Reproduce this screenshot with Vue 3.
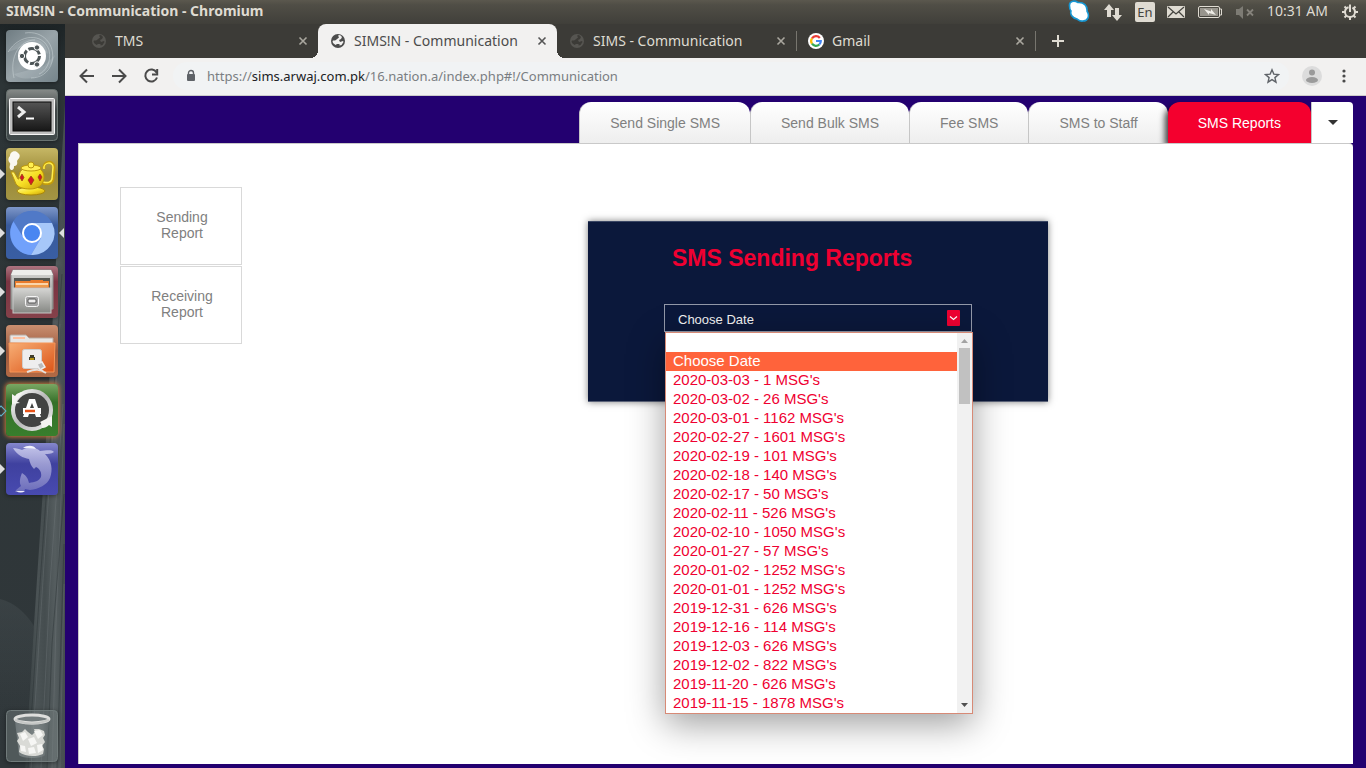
<script setup>
import { ref } from 'vue'

const browserTabs = [
  { title: 'TMS', icon: 'globe' },
  { title: 'SIMS!N - Communication', icon: 'globe', active: true },
  { title: 'SIMS - Communication', icon: 'globe' },
  { title: 'Gmail', icon: 'google' }
]
const pageTabs = ['Send Single SMS', 'Send Bulk SMS', 'Fee SMS', 'SMS to Staff', 'SMS Reports']
const activeTab = ref('SMS Reports')
const sideItems = ['Sending Report', 'Receiving Report']
const dates = [
  '', 'Choose Date', "2020-03-03 - 1 MSG's", "2020-03-02 - 26 MSG's", "2020-03-01 - 1162 MSG's",
  "2020-02-27 - 1601 MSG's", "2020-02-19 - 101 MSG's", "2020-02-18 - 140 MSG's", "2020-02-17 - 50 MSG's",
  "2020-02-11 - 526 MSG's", "2020-02-10 - 1050 MSG's", "2020-01-27 - 57 MSG's", "2020-01-02 - 1252 MSG's",
  "2020-01-01 - 1252 MSG's", "2019-12-31 - 626 MSG's", "2019-12-16 - 114 MSG's", "2019-12-03 - 626 MSG's",
  "2019-12-02 - 822 MSG's", "2019-11-20 - 626 MSG's", "2019-11-15 - 1878 MSG's"
]
const chosen = ref('Choose Date')
</script>

<template>
  <div class="desktop">
    <header class="topbar">
      <span class="window-title">SIMS!N - Communication - Chromium</span>
      <div class="indicators">
        <svg width="24" height="24" viewBox="0 0 24 24"><path d="M2.500 6C2 1 7 0 11 2.500c6-.5 9.500 3.500 9 8.500 3 5 1 10-4 10-3 .5-4-.5-6-2-5-1-7-5-6-8-1-1-1.500-3-1.500-5z" fill="#fff" stroke="#1797d3" stroke-width="1.600" /></svg>
        <svg width="20" height="24" viewBox="0 0 20 24"><g fill="#dfdbd2"><path d="M6 4l5 6H8v7H4v-7H1z" /><path d="M14 21l5-6h-3V8h-4v7H9z" /></g></svg>
        <span class="lang">En</span>
        <svg width="18" height="24" viewBox="0 0 18 24"><rect y="6" width="18" height="12" rx="1" fill="#dfdbd2" /><path d="M1 7l8 7 8-7M1 17l5-5M17 17l-5-5" fill="none" stroke="#45443f" stroke-width="1.2" /></svg>
        <svg width="26" height="24" viewBox="0 0 26 24"><rect x="1.500" y="6.500" width="21" height="11" rx="1.500" fill="none" stroke="#dfdbd2" /><rect x="3" y="8" width="18" height="8" fill="#98958d" /><path d="M23 9h1.500v6H23" fill="none" stroke="#dfdbd2" /><path d="M7 9l7 2.500V9l5 6-7-2v2z" fill="#eeece6" /></svg>
        <svg width="20" height="24" viewBox="0 0 20 24"><path d="M1 9h3l4-3v13l-4-4H1z" fill="#7d7b74" /><path d="M12 9.500l6 6M18 9.500l-6 6" stroke="#85827b" stroke-width="1.800" /></svg>
        <span class="clock">10:31 AM</span>
        <svg width="18" height="24" viewBox="0 0 18 24"><g stroke="#dfdbd2" fill="none" stroke-width="2"><circle cx="9" cy="12" r="5" stroke-dasharray="27.500 4" stroke-dashoffset="-25.500" /><path d="M9 4.500V12" /><path d="M3.500 6.500l2 2M14.500 6.500l-2 2M1 12h3M14 12h3M3.500 17.500l2-2M14.500 17.500l-2-2M9 17v3" /></g></svg>
      </div>
    </header>

    <div class="workspace">
      <nav class="launcher" aria-label="Launcher">
        <svg class="wall" viewBox="0 0 65 744" preserveAspectRatio="none">
          <defs>
            <linearGradient id="wd" x1="0" y1="0" x2="1" y2="0"><stop offset="0" stop-color="#343c3e" /><stop offset=".3" stop-color="#4b5355" /><stop offset=".5" stop-color="#454d4f" /><stop offset=".75" stop-color="#555d5f" /><stop offset="1" stop-color="#454d4f" /></linearGradient>
            <linearGradient id="bk" x1="0" y1="0" x2="0" y2="1"><stop offset="0" stop-color="#1d2426" /><stop offset=".08" stop-color="#2d3537" /><stop offset="1" stop-color="#30373a" /></linearGradient>
            <linearGradient id="hz" x1="0" y1="0" x2="0" y2="1"><stop offset="0" stop-color="#454d50" stop-opacity=".5" /><stop offset="1" stop-color="#454d50" stop-opacity="0" /></linearGradient>
          </defs>
          <rect width="65" height="744" fill="url(#bk)" />
          <path d="M62 130L65 80V744H25L34 600 44 450z" fill="url(#wd)" />
          <path d="M60 300L44 540 31 744M63 380L50 560 41 744M64 400L56 600 52 744M64 560L60 744" fill="none" stroke="#798183" stroke-opacity=".3" />
          <path d="M62 250L40 560 28 744M64 470L52 620 47 744M64 520L57 744" fill="none" stroke="#262e30" stroke-opacity=".4" />
          <path d="M0 575Q20 580 34 602L27 700H0z" fill="url(#hz)" />
        </svg>

        <button class="app" aria-label="Dash">
          <svg viewBox="0 0 52 52"><defs><linearGradient id="da" x1="0" y1="0" x2="1" y2="1"><stop stop-color="#6f7c82" /><stop offset=".5" stop-color="#99a4a9" /><stop offset="1" stop-color="#75848b" /></linearGradient></defs><rect width="52" height="52" rx="4" fill="url(#da)" /><path d="M2 22C13 4 37 2 43 20c3 12-4 22-10 24M8 48C3 26 14 10 29 10M19 3c18-3 31 12 27 29-3 11-12 16-21 16" fill="none" stroke="#d4dde0" stroke-width="1" opacity=".45" /><path d="M2 22C18 2 40 6 42 24L26 14zM8 44C12 50 40 55 49 25L38 36z" fill="#d1dcdf" opacity=".22" /><circle cx="26" cy="26" r="14" fill="#fff" /><circle cx="26" cy="26" r="7.500" fill="none" stroke="#4d5557" stroke-width="3" stroke-dasharray="13.700 2" /><g fill="#4d5557" stroke="#fff"><circle cx="16" cy="26" r="2.700" /><circle cx="31" cy="17.500" r="2.700" /><circle cx="31" cy="34.500" r="2.700" /></g></svg>
        </button>
        <button class="app" aria-label="Terminal">
          <svg viewBox="0 0 52 52"><defs><linearGradient id="te" x1="0" y1="0" x2="0" y2="1"><stop stop-color="#878b89" /><stop offset=".4" stop-color="#414748" /><stop offset="1" stop-color="#414a4b" /></linearGradient><linearGradient id="ts" x1="0" y1="0" x2="0" y2="1"><stop stop-color="#555" /><stop offset="1" stop-color="#171717" /></linearGradient></defs><rect x=".5" y=".5" width="51" height="51" rx="4" fill="url(#te)" stroke="#697371" /><rect x="3.500" y="9.500" width="45" height="36" rx="1" fill="#bebebe" stroke="#f5f5f5" /><rect x="7" y="13" width="38" height="29" fill="url(#ts)" stroke="#090909" /><path d="M12 18l6 5-6 5" fill="none" stroke="#ededed" stroke-width="3" /><path d="M20 29.500h8" stroke="#fff" stroke-width="2" /></svg>
        </button>
        <button class="app running" aria-label="Teapot">
          <svg viewBox="0 0 52 52"><defs><linearGradient id="tp" x1="0" y1="0" x2="0" y2="1"><stop stop-color="#c6b765" /><stop offset=".5" stop-color="#9b8936" /><stop offset="1" stop-color="#a39544" /></linearGradient><linearGradient id="tb" x1="0" y1="0" x2="1" y2="1"><stop stop-color="#fffc95" /><stop offset=".55" stop-color="#f7df25" /><stop offset="1" stop-color="#c99b05" /></linearGradient></defs><rect width="52" height="52" rx="4" fill="url(#tp)" /><path d="M38 21c-1-8 9-9 10-2l-1 12c-1 5-6 5-10 4" fill="none" stroke="#c49c0a" stroke-width="3" /><path d="M38 21c-1-7 9-8 9-2l-1 12c-1 4-5 4-9 3" fill="none" stroke="#ffed4b" stroke-width="1.500" /><ellipse cx="25" cy="43" rx="14" ry="4" fill="url(#tb)" stroke="#a98608" /><path d="M10 36L5 24l3 0 4 7 1 0c-1-7 4-13 12-13s13 5 13 11c0 8-6 12-14 12-7 0-12-2-14-5z" fill="url(#tb)" stroke="#bd980b" /><ellipse cx="25" cy="20" rx="10" ry="3" fill="#ffed54" stroke="#bf990b" /><circle cx="25" cy="17" r="3" fill="#fff050" stroke="#b8930d" /><path d="M16 26l2 3.500-2 3.500-2-3.500zM25 28l3 4-3 5-3-5zM34 26l2 3-2 4-2-4z" fill="#d51626" stroke="#92440b" stroke-width=".7" /><path d="M5 22c-3-3 0-5-1-7-3-3-1-6 0-7 0-5 6-6 8-3 4 3 0 6-1 8 1 4-1 5-3 5 0 2 0 4-3 4z" fill="#fff" opacity=".92" /></svg>
        </button>
        <button class="app running focused" aria-label="Chromium">
          <svg viewBox="0 0 52 52"><defs><linearGradient id="ch" x1="0" y1="0" x2="0" y2="1"><stop stop-color="#7e97c9" /><stop offset=".35" stop-color="#395b9c" /><stop offset="1" stop-color="#395ea3" /></linearGradient></defs><rect width="52" height="52" rx="4" fill="url(#ch)" /><circle cx="26" cy="26" r="22" fill="#527dcc" /><path d="M7.500 14.500A22 22 0 0 0 25 48l10-17-9-15z" fill="#71a1fb" /><path d="M25 48A22 22 0 0 0 46 16H26l9 15z" fill="#a6c7f9" /><path d="M7.500 14.500C15 1 37-1 46 16H26a10 10 0 0 0-9 14z" fill="#5079c7" /><circle cx="26" cy="26" r="9" fill="#4986f1" stroke="#fff" stroke-width="2" /></svg>
        </button>
        <button class="app running" aria-label="Files">
          <svg viewBox="0 0 52 52"><defs><linearGradient id="fr" x1="0" y1="0" x2="0" y2="1"><stop stop-color="#ad7480" /><stop offset=".3" stop-color="#7b3442" /><stop offset="1" stop-color="#85414a" /></linearGradient><linearGradient id="fg" x1="0" y1="0" x2="0" y2="1"><stop stop-color="#d6d6d4" /><stop offset="1" stop-color="#858783" /></linearGradient></defs><rect width="52" height="52" rx="4" fill="url(#fr)" /><path d="M7 4h38l2 5v34H5V9z" fill="url(#fg)" stroke="#8d8f8c" /><path d="M7 4h38l2 5H5z" fill="#ededeb" /><path d="M8 12h36v11H8z" fill="#555753" /><path d="M9 15h15l1-1h12v1h6v9H9z" fill="#e97b2c" /><path d="M10 18h32" stroke="#fff2d4" stroke-width="1.500" /><path d="M10 20h32" stroke="#f5bd6c" /><rect x="7" y="22" width="38" height="25" fill="url(#fg)" stroke="#c8c8c7" /><rect x="19.500" y="30.500" width="13" height="10" rx="2" fill="#a4a4a4" stroke="#f5f5f5" /><rect x="22" y="33" width="8" height="4" rx="1" fill="#eee" stroke="#555" /></svg>
        </button>
        <button class="app running" aria-label="Network folder">
          <svg viewBox="0 0 52 52"><defs><linearGradient id="nr" x1="0" y1="0" x2="0" y2="1"><stop stop-color="#c98f70" /><stop offset=".5" stop-color="#9d593d" /><stop offset="1" stop-color="#b26a45" /></linearGradient><linearGradient id="ng" x1="0" y1="0" x2="1" y2="1"><stop stop-color="#f7af76" /><stop offset="1" stop-color="#dc5417" /></linearGradient></defs><rect width="52" height="52" rx="4" fill="url(#nr)" /><path d="M4 18v-7q0-1 1-1h15l3 3h24v6z" fill="#e7e6e4" stroke="#b8aaa1" /><path d="M7 13h12" stroke="#ffc09f" stroke-width="2" /><path d="M3 18h46l-1 29H4z" fill="url(#ng)" stroke="#f69557" /><rect x="16.500" y="24.500" width="19" height="19" rx="2" fill="#eee" stroke="#d1cecb" /><path d="M23 35v-3h1v-2h4v2h1v3z" fill="#41402e" /><path d="M24 34h4" stroke="#b49213" stroke-width="2" /><path d="M31 39l5-2 3 5-5 3z" fill="#bababa" stroke="#eee" stroke-width="1.500" /><path d="M21 47c8-3 13-3 19 1M35 45l3 2" fill="none" stroke="#e4e1dd" stroke-width="2" /></svg>
        </button>
        <button class="app urgent" aria-label="Software Updater">
          <svg viewBox="0 0 52 52"><defs><linearGradient id="gr" x1="0" y1="0" x2="0" y2="1"><stop stop-color="#7aa763" /><stop offset=".35" stop-color="#357029" /><stop offset="1" stop-color="#387e2c" /></linearGradient><linearGradient id="gm" x1="0" y1="0" x2="1" y2="1"><stop stop-color="#fff" /><stop offset=".5" stop-color="#b8b8b8" /><stop offset="1" stop-color="#efefef" /></linearGradient></defs><rect width="52" height="52" rx="4" fill="url(#gr)" /><circle cx="26" cy="26" r="19" fill="#424342" stroke="url(#gm)" stroke-width="4" /><path d="M6 20V10l3 2c2-3 5-4 8-4l-7 9 4 2zM46 32v11l-3-2c-2 2-4 3-7 3l-1-5-1-1z" fill="#f4f4f1" /><path d="M17 33h5l1-3h6l1 3h5l-6-18h-6zM24 24l2-5 2 5z" fill="#fff" fill-rule="evenodd" /><path d="M17 24h18v6H17z" fill="#fff" /><path d="M19 27h10" stroke="#e8541a" stroke-width="2.500" /></svg>
        </button>
        <button class="app running" aria-label="MySQL Workbench">
          <svg viewBox="0 0 52 52"><defs><linearGradient id="mr" x1="0" y1="0" x2="0" y2="1"><stop stop-color="#8587cd" /><stop offset=".4" stop-color="#3f419f" /><stop offset="1" stop-color="#484ab0" /></linearGradient><linearGradient id="mg" x1="0" y1="0" x2="0" y2="1"><stop stop-color="#d0d0f0" /><stop offset="1" stop-color="#7475bd" /></linearGradient></defs><rect width="52" height="52" rx="4" fill="url(#mr)" /><path d="M7 5c4 0 6 1 9 2 6-4 14-3 18 1 5 0 11-2 14 1-3 2-6 2-9 2 7 7 8 16 5 24-3 7-11 11-20 12l-5-1-1 3h-9c1-3 4-4 6-6-2-4-1-8 1-13 5 3 6 6 7 10 6-1 10-2 12-6 1-4-1-8-5-10l-2 2c-3-3-4-6-5-10-6-1-12-4-16-11z" fill="url(#mg)" opacity=".82" /><path d="M17 5c4-3 11-3 13 1-4-1-8-1-13-1zM10 48q5 3 9 0" fill="#f1f1fc" /></svg>
        </button>
        <button class="app trash" aria-label="Trash">
          <svg viewBox="0 0 52 52"><defs><linearGradient id="tr" x1="0" y1="0" x2="1" y2="0"><stop stop-color="#6c7577" /><stop offset=".4" stop-color="#9da4a4" stop-opacity=".4" /><stop offset="1" stop-color="#60686a" /></linearGradient></defs><rect x=".5" y=".5" width="51" height="51" rx="4" fill="#7e8789" fill-opacity=".42" stroke="#717b7b" /><path d="M9 11l4 34c3 4 23 4 26 0l4-34z" fill="url(#tr)" /><path d="M13 42l1-6-3-5 2-3-2-5 5-1 3-3 3 3 4 3 3-3-1-3 5 0 5 2 1 4-2 3 2 4-3 4 2 3-1 5c-6 3-18 3-24-2z" fill="#d9dad6" /><path d="M14 24l5-2 3 5-5 4zM28 21l6-1 3 5-5 4zM22 29l6-2 3 6-6 3zM14 35l5 1 1 6-5-1zM31 35l5-1 1 6-5 3zM22 38l6-1 2 6-7 1z" fill="#f6f6f4" /><ellipse cx="26" cy="9" rx="17" ry="4" fill="#737b7c" stroke="#dededc" stroke-width="3" /><path d="M9 10q17 7 34 0" fill="none" stroke="#c5c7c5" stroke-width="2" /></svg>
        </button>
      </nav>

      <section class="browser">
        <div class="tabstrip">
          <div v-for="t in browserTabs" :key="t.title" class="btab" :class="{ active: t.active, google: t.icon === 'google' }">
            <svg v-if="t.icon === 'globe'" class="fav" viewBox="0 0 16 16"><circle cx="8" cy="8" r="7" fill="currentColor" /><path d="M2.500 8c1-1 3 0 4-1.500L9 4.500 8 2.500l2-.5 2 2-1 2-2 1 1 2 3-1 .5 1-2 3-2 .5V11H7l-1.500 1L3 10z" fill="var(--tab-bg)" /></svg>
            <svg v-else class="fav" viewBox="0 0 16 16"><circle cx="8" cy="8" r="8" fill="#fff" /><g fill="none" stroke-width="2.200"><path d="M11.800 5A4.800 4.800 0 0 0 4 5.300" stroke="#ea3b35" /><path d="M4 5.300a4.800 4.800 0 0 0 0 5.400" stroke="#fbbc05" /><path d="M4 10.700a4.800 4.800 0 0 0 7.300.8" stroke="#34a853" /><path d="M8 8h4.800c0 1.500-.4 2.500-1.500 3.500" stroke="#4285f4" /></g></svg>
            <span class="btitle">{{ t.title }}</span>
            <button class="close" :aria-label="'Close ' + t.title"><svg width="10" height="10" viewBox="0 0 10 10"><path d="M1.500 1.500l7 7M8.500 1.500l-7 7" stroke="currentColor" stroke-width="1.600" /></svg></button>
          </div>
          <button class="newtab" aria-label="New tab"><svg width="14" height="14" viewBox="0 0 14 14"><path d="M7 1v12M1 7h12" stroke="currentColor" stroke-width="2" /></svg></button>
        </div>

        <div class="toolbar">
          <button class="tool" aria-label="Back"><svg viewBox="0 0 16 16"><path d="M15 8H2M8 1.500L1.500 8 8 14.500" /></svg></button>
          <button class="tool" aria-label="Forward"><svg viewBox="0 0 16 16"><path d="M1 8h13M8 1.500L14.500 8 8 14.500" /></svg></button>
          <button class="tool" aria-label="Reload"><svg viewBox="0 0 16 16"><path d="M13.500 4.500A6 6 0 1 0 14 9.500M14.200 1v5.500H9" /></svg></button>
          <div class="omnibox">
            <svg width="10" height="14" viewBox="0 0 10 14"><path d="M2.500 6V4a2.500 2.500 0 0 1 5 0v2" fill="none" stroke="#5f6368" stroke-width="1.400" /><rect x="1" y="5" width="8" height="7" rx="1" fill="#5f6368" /></svg>
            <span class="url">https://<b>sims.arwaj.com.pk</b>/16.nation.a/index.php#!/Communication</span>
            <button class="star" aria-label="Bookmark this page"><svg width="16" height="16" viewBox="0 0 16 16"><path d="M8 1.800l1.800 4.300 4.700.4-3.600 3.100 1.100 4.600L8 11.700l-4 2.500 1.100-4.600-3.600-3.100 4.700-.4z" fill="none" stroke="#5f6368" stroke-width="1.400" /></svg></button>
          </div>
          <button class="avatar" aria-label="Profile"><svg viewBox="0 0 20 20"><circle cx="10" cy="10" r="10" fill="#dcdcdc" /><circle cx="10" cy="6.500" r="3" fill="#9b9b9b" /><ellipse cx="10" cy="14" rx="6" ry="3" fill="#9b9b9b" /></svg></button>
          <button class="menu" aria-label="Menu"><svg width="4" height="14" viewBox="0 0 4 14" fill="#4a4a4a"><circle cx="2" cy="2" r="1.600" /><circle cx="2" cy="7" r="1.600" /><circle cx="2" cy="12" r="1.600" /></svg></button>
        </div>

        <main class="page">
          <nav class="ptabs" aria-label="Sections">
            <button v-for="p in pageTabs" :key="p" class="ptab" :class="{ on: p === activeTab }" @click="activeTab = p">{{ p }}</button>
            <button class="more" aria-label="More sections"><svg width="10" height="5" viewBox="0 0 10 5"><path d="M0 0h10L5 5z" fill="#333" /></svg></button>
          </nav>
          <div class="panel">
            <aside class="side">
              <button v-for="s in sideItems" :key="s" class="side-item">{{ s }}</button>
            </aside>
            <div class="content">
              <div class="card">
                <h1>SMS Sending Reports</h1>
                <div class="picker">
                  <select v-model="chosen" class="select" aria-label="Choose Date">
                    <option v-for="d in dates" :key="d" :value="d">{{ d }}</option>
                  </select>
                  <svg class="arrow" viewBox="0 0 13 16"><rect width="13" height="16" rx="1" fill="#ef0031" /><path d="M3 6.500l3.500 3 3.500-3" fill="none" stroke="#fff" stroke-width="1.200" /></svg>
                  <div class="popup">
                    <ul role="listbox" aria-label="Dates">
                      <li v-for="d in dates" :key="d" role="option" :aria-selected="d === chosen" :class="{ sel: d === chosen }" @click="chosen = d">{{ d }}</li>
                    </ul>
                    <div class="bar">
                      <svg width="15" height="15" viewBox="0 0 15 15"><path d="M4 10h7L7.500 6z" fill="#a3a3a3" /></svg>
                      <div class="thumb"></div>
                      <svg class="down" width="15" height="15" viewBox="0 0 15 15"><path d="M4 5h7l-3.500 4z" fill="#505050" /></svg>
                    </div>
                  </div>
                </div>
              </div>
            </div>
          </div>
        </main>
      </section>
    </div>
  </div>
</template>

<style>
html, body { margin: 0; overflow: hidden; }
</style>

<style scoped>
* { box-sizing: border-box; }
button { font: inherit; color: inherit; border: 0; padding: 0; background: none; cursor: pointer; }
svg { display: block; flex: none; }
.desktop { height: 100vh; display: flex; flex-direction: column; font-family: "Noto Sans", "Open Sans", sans-serif; }
.topbar { height: 24px; flex: none; display: flex; align-items: center; justify-content: space-between; padding: 0 7px 0 6px; color: #dfdbd2; background: linear-gradient(#5b584e, #504e46 20%, #403f3a); }
.window-title { padding-bottom: 2px; font-size: 14px; line-height: 20px; font-weight: 700; }
.indicators { display: flex; align-items: center; gap: 12px; font-size: 14px; }
.lang { width: 20px; height: 20px; border-radius: 2px; background: #dfdbd2; color: #45443f; font-size: 13px; line-height: 20px; text-align: center; }
.clock { margin-right: 1px; padding-bottom: 2px; font-size: 14px; line-height: 20px; }
.workspace { flex: 1; min-height: 0; display: flex; }

.launcher { position: relative; width: 65px; flex: none; display: flex; flex-direction: column; gap: 7px; padding: 6px 7px 6px 6px; background: #30373a; }
.wall { position: absolute; inset: 0; width: 100%; height: 100%; }
.app { position: relative; width: 52px; height: 52px; border-radius: 4px; box-shadow: 0 1px 4px rgba(0, 0, 0, .4); }
.app svg { width: 52px; height: 52px; }
.running::before { content: ""; position: absolute; left: -6px; top: 21px; border: 5px solid transparent; border-left-color: #dedede; border-right-width: 0; }
.focused::after { content: ""; position: absolute; right: -6px; top: 21px; border: 5px solid transparent; border-right-color: #dedede; border-left-width: 0; }
.urgent { box-shadow: 0 0 4px 1px #c97838; }
.urgent::before { content: ""; position: absolute; left: -9px; top: 23px; width: 6px; height: 6px; border: 1px solid #63b7cd; transform: rotate(45deg); }
.trash { margin-top: auto; }

.browser { flex: 1; min-width: 0; display: flex; flex-direction: column; }
.tabstrip { height: 34px; flex: none; display: flex; padding-left: 14px; background: #3c3b37; color: #dfdbd2; }
.btab { --tab-bg: #3c3b37; position: relative; width: 239px; display: flex; align-items: center; gap: 8px; padding: 0 10px 0 12px; font-size: 14px; }
.btab.active { --tab-bg: #f2f1f0; background: #f2f1f0; color: #4c4c4c; border-radius: 8px 8px 0 0; }
.btab.active::before, .btab.active::after { content: ""; position: absolute; bottom: 0; width: 8px; height: 8px; }
.btab.active::before { left: -8px; background: radial-gradient(circle at 0 0, #3c3b37 8px, #f2f1f0 8px); }
.btab.active::after { right: -8px; background: radial-gradient(circle at 100% 0, #3c3b37 8px, #f2f1f0 8px); }
.btab.google::before, .btab.google::after { content: ""; position: absolute; top: 7px; width: 1px; height: 20px; background: #77756e; }
.btab.google::before { left: 0; }
.btab.google::after { right: -1px; }
.fav { width: 16px; height: 16px; color: #565551; }
.active .fav { color: #4c4c4c; }
.btitle { flex: 1; padding-bottom: 2px; white-space: nowrap; }
.close { width: 10px; height: 10px; color: #aaa79f; }
.active .close { color: #555; }
.newtab { margin-left: 16px; }

.toolbar { height: 38px; flex: none; display: flex; align-items: center; padding: 0 20px 1px 14px; background: #f2f1f0; border-bottom: 1px solid #cdcbc9; }
.tool { width: 16px; height: 16px; margin-right: 16px; }
.tool svg { width: 16px; height: 16px; fill: none; stroke: #4a4a4a; stroke-width: 2; }
.omnibox { flex: 1; height: 28px; margin-right: 13px; margin-left: -2px; display: flex; align-items: center; padding: 0 9px 0 13px; border-radius: 14px; background: #f1f3f4; font-size: 13px; color: #7a7e82; }
.url { flex: 1; margin-left: 11px; white-space: nowrap; }
.url b { font-weight: 400; color: #202124; }
.avatar, .avatar svg { width: 20px; height: 20px; }
.menu { margin-left: 20px; }

.page { flex: 1; min-height: 0; display: flex; flex-direction: column; padding: 6px 13px 4px; background: #230070; font-family: "Liberation Sans", Arial, sans-serif; }
.ptabs { height: 41px; flex: none; display: flex; justify-content: flex-end; }
.ptab { padding: 0 30px; border-left: 1px solid #c6c6c6; border-radius: 12px 12px 0 0; background: linear-gradient(#fff, #eee); color: #808080; font-size: 14px; white-space: nowrap; }
.ptab.on { position: relative; border-left: 0; background: #f4002e; color: #fff; box-shadow: -3px 4px 6px rgba(0, 0, 0, .75); }
.more { position: relative; width: 42px; display: grid; place-items: center; border-left: 1px solid #c6c6c6; border-radius: 0 4px 0 0; background: #fff; }
.panel { position: relative; flex: 1; min-height: 0; display: flex; background: #fff; border: 1px solid #c9c9c9; border-bottom: 0; border-right: 0; border-radius: 0 4px 0 0; }
.side { width: 204px; flex: none; display: flex; flex-direction: column; gap: 1px; padding: 43px 41px 0; }
.side-item { padding: 21px 27px 23px 29px; border: 1px solid #d9d9d9; background: #fff; color: #808080; font-size: 14px; line-height: 16px; }
.content { flex: 1; display: flex; justify-content: center; align-items: flex-start; padding-top: 77px; }
.card { width: 460px; height: 181px; padding: 23px 76px 0; background: #0b183b; border: 1px solid #3a4664; border-bottom-color: #5b6379; border-left: 0; border-right: 0; box-shadow: 0 0 7px rgba(0, 0, 0, .5); }
h1 { margin: 0 0 33px 8px; color: #ef0031; font-size: 23px; line-height: 26px; font-weight: 700; white-space: nowrap; }
.picker { position: relative; height: 28px; }
.select { display: block; width: 100%; height: 28px; appearance: none; padding: 3px 30px 0 13px; border: 1px solid #9298a8; border-radius: 0; outline: 0; background: #0b183b; color: #f4f4f4; font: 13px "Liberation Sans", Arial, sans-serif; }
.arrow { position: absolute; right: 12px; top: 6px; width: 13px; height: 16px; pointer-events: none; }
.popup { position: absolute; left: 1px; top: 28px; width: 100%; display: flex; border: 1px solid #d78a76; background: #fff; box-shadow: 0 10px 34px rgba(0, 0, 0, .38); }
ul { flex: 1; margin: 0; padding: 0; list-style: none; }
li { height: 19px; padding-left: 7px; color: #ef0031; font-size: 15px; line-height: 17px; white-space: nowrap; cursor: default; }
li.sel { background: #ff633b; color: #fff; }
.bar { width: 15px; display: flex; flex-direction: column; background: #f1f1f1; }
.thumb { height: 56px; margin: 0 2px; background: #c1c1c1; }
.down { margin-top: auto; }
</style>
